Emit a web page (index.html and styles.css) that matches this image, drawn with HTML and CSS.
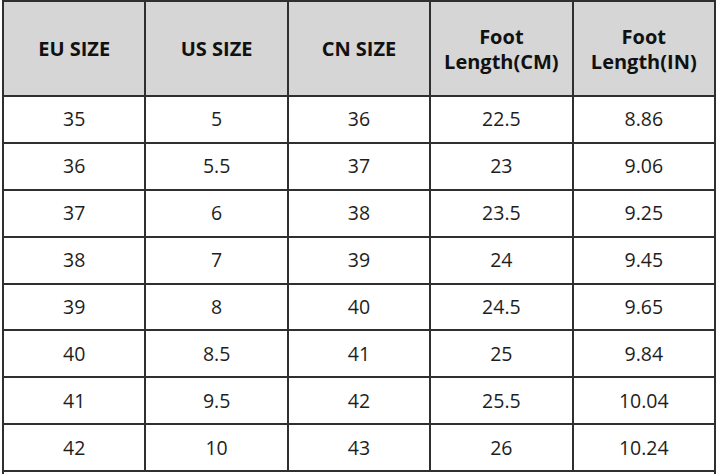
FILE: index.html
```html
<!DOCTYPE html>
<html>
<head>
<meta charset="utf-8">
<link rel="stylesheet" href="styles.css">
</head>
<body>
<table class="sizes">
  <thead>
    <tr class="head">
      <th>EU SIZE</th>
      <th>US SIZE</th>
      <th>CN SIZE</th>
      <th>Foot<br>Length(CM)</th>
      <th>Foot<br>Length(IN)</th>
    </tr>
  </thead>
  <tbody>
    <tr><td>35</td><td>5</td><td>36</td><td>22.5</td><td>8.86</td></tr>
    <tr><td>36</td><td>5.5</td><td>37</td><td>23</td><td>9.06</td></tr>
    <tr><td>37</td><td>6</td><td>38</td><td>23.5</td><td>9.25</td></tr>
    <tr><td>38</td><td>7</td><td>39</td><td>24</td><td>9.45</td></tr>
    <tr><td>39</td><td>8</td><td>40</td><td>24.5</td><td>9.65</td></tr>
    <tr><td>40</td><td>8.5</td><td>41</td><td>25</td><td>9.84</td></tr>
    <tr><td>41</td><td>9.5</td><td>42</td><td>25.5</td><td>10.04</td></tr>
    <tr><td>42</td><td>10</td><td>43</td><td>26</td><td>10.24</td></tr>
    <tr class="tail"><td colspan="5"></td></tr>
  </tbody>
</table>
</body>
</html>
```
FILE: styles.css
```css
html, body {
  margin: 0;
  padding: 0;
  background: #ffffff;
  overflow: hidden;
}
.sizes {
  margin-left: 2px;
  width: 714px;
  border-collapse: collapse;
  table-layout: fixed;
  font-family: "Open Sans", "Liberation Sans", sans-serif;
}
.sizes th, .sizes td {
  border: 2px solid #2f2f2f;
  text-align: center;
  vertical-align: middle;
  padding: 0;
}
.sizes th {
  background: #d6d6d6;
  color: #111111;
  font-weight: 700;
  font-size: 20px;
  line-height: 25px;
  height: 93px;
}
.sizes td {
  color: #1e1e1e;
  font-size: 19.5px;
  line-height: 24px;
  height: 44.9px;
}
.sizes tr.tail td {
  height: 60px;
}
```
